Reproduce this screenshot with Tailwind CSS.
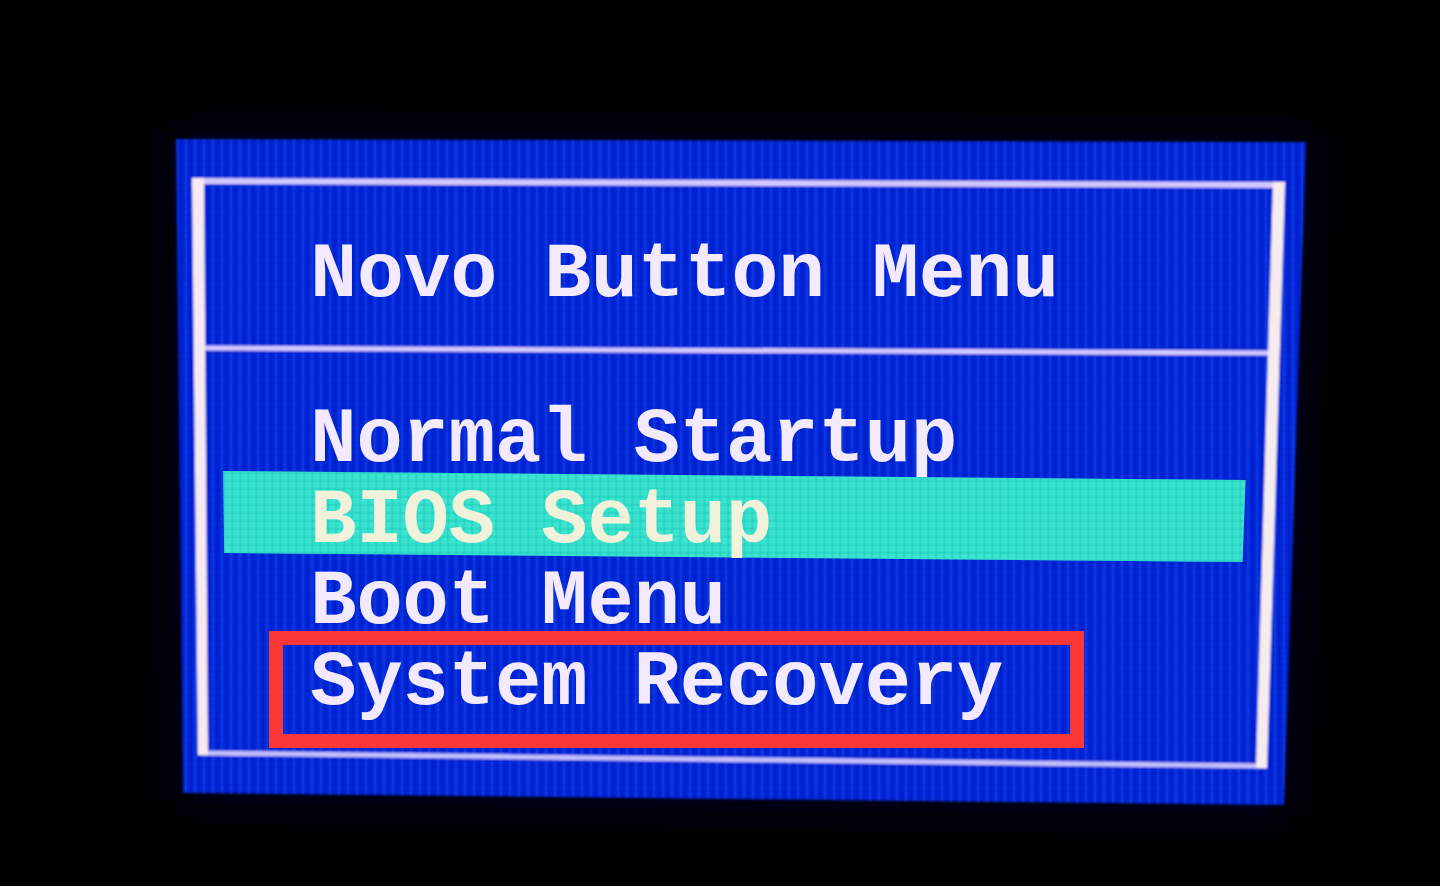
<!DOCTYPE html>
<html lang="en">
<head>
<meta charset="utf-8">
<meta name="viewport" content="width=device-width, initial-scale=1">
<title>Novo Button Menu</title>
<script src="https://cdn.jsdelivr.net/npm/@tailwindcss/browser@4"></script>
</head>
<body class="bg-black">
<main class="relative isolate min-h-screen overflow-hidden bg-black pt-[235px] pr-[13.5%] pl-[15.5%] font-['Liberation_Mono',monospace] text-[77px] font-bold text-[#f3eaff]">
  <!-- Tilted screen with its double-weight frame -->
  <svg class="absolute inset-0 -z-10 h-full w-full" viewBox="0 0 1440 886" preserveAspectRatio="none" aria-hidden="true">
    <defs>
      <pattern id="weave" width="9" height="6" patternUnits="userSpaceOnUse">
        <rect width="9" height="6" fill="#0429d8"/>
        <rect width="3" height="6" fill="#001ecf"/>
        <rect x="5" width="2" height="6" fill="#0d3be6"/>
        <rect y="4" width="9" height="2" fill="#0018c8" opacity=".25"/>
      </pattern>
      <filter id="glow" x="-10%" y="-10%" width="120%" height="120%"><feGaussianBlur stdDeviation="22"/></filter>
      <filter id="soft" x="-2%" y="-2%" width="104%" height="104%"><feGaussianBlur stdDeviation="1.2"/></filter>
    </defs>
    <polygon points="170,130 1314,134 1292,816 176,804" fill="#00001c" filter="url(#glow)"/>
    <g filter="url(#soft)">
      <polygon points="176,139 1306,142 1284,805 183,793" fill="url(#weave)"/>
      <path d="M192 181 L1284 185" stroke="#d2c8ff" stroke-width="6"/>
      <path d="M204 348 L1269 353" stroke="#d2c8ff" stroke-width="5"/>
      <path d="M200 753 L1266 766" stroke="#c2befc" stroke-width="5"/>
      <polygon points="192,178 204,178 208,755 198,755" fill="#f6e9f2"/>
      <polygon points="1273,182 1285,182 1267,768 1256,768" fill="#f6ecee"/>
    </g>
  </svg>

  <h1 class="pl-[87px] text-[78px] leading-[81px] whitespace-nowrap">Novo Button Menu</h1>

  <ul class="mt-[74px]">
    <li><button type="button" class="block h-[81px] w-full pl-[87px] text-left leading-[101px] whitespace-nowrap">Normal Startup</button></li>
    <li>
      <button type="button" class="relative isolate block h-[81px] w-full pl-[87px] text-left leading-[101px] whitespace-nowrap text-[#f2f2da]">
        <span class="absolute top-0 right-0 left-0 -z-10 h-[91px] bg-[#3ce4d0] bg-[repeating-linear-gradient(90deg,#18c9b866_0px,#18c9b866_2px,transparent_3px,transparent_8px),repeating-linear-gradient(0deg,#18c9b866_0px,#18c9b866_2px,transparent_3px,transparent_8px)] [clip-path:polygon(0_0,100%_9px,calc(100%_-_3px)_100%,1px_82px)]"></span>
        BIOS Setup
      </button>
    </li>
    <li><button type="button" class="block h-[81px] w-full pl-[87px] text-left leading-[101px] whitespace-nowrap">Boot Menu</button></li>
    <li>
      <button type="button" class="relative block h-[81px] w-full pl-[87px] text-left leading-[101px] whitespace-nowrap">
        System Recovery
        <span class="absolute -top-[2px] left-[46px] h-[117px] w-[815px] border-[14px] border-[#fb3837]"></span>
      </button>
    </li>
  </ul>
</main>
</body>
</html>
